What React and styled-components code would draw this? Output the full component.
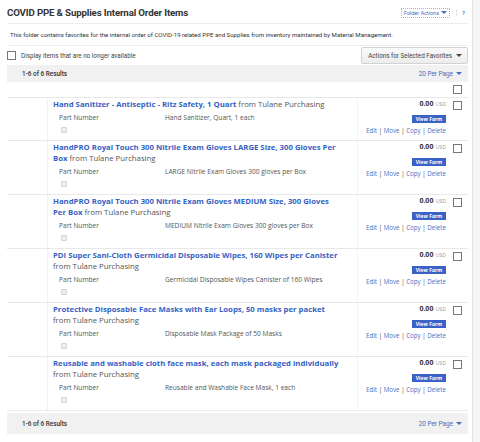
import React from 'react'
import styled, { createGlobalStyle } from 'styled-components'

const GlobalStyle = createGlobalStyle`
  html, body {
    margin: 0;
    padding: 0;
    background: #f5f5f5;
  }
  body {
    font-family: "Open Sans", "Liberation Sans", sans-serif;
    color: #333;
  }
`

const Panel = styled.div`
  width: 461px;
  min-height: 442px;
  background: #fff;
  border-right: 1px solid #e2e2e2;
  padding: 0 4px 0 7px;
`

const TitleBar = styled.div`
  display: flex;
  align-items: center;
  height: 21px;
  padding-top: 2px;
  border-bottom: 1px solid #ececec;
`

const Title = styled.h1`
  flex: 1;
  margin: 0;
  font-family: Roboto, "Liberation Sans", sans-serif;
  font-size: 9.7px;
  font-weight: 700;
  letter-spacing: -0.15px;
  color: #333;
`

const FolderActions = styled.span`
  display: inline-flex;
  align-items: center;
  gap: 2px;
  height: 8px;
  padding: 0 2px;
  border: 1px dotted #9fb3dc;
  font-family: Roboto, "Liberation Sans", sans-serif;
  font-size: 5.5px;
  color: #4a6fc0;
`

const Help = styled.span`
  margin-left: 6px;
  padding-left: 5px;
  border-left: 1px solid #e3e3e3;
  margin-right: 3px;
  font-family: Roboto, "Liberation Sans", sans-serif;
  font-size: 6px;
  font-weight: 700;
  color: #6880b8;
`

const Description = styled.p`
  margin: 0;
  padding: 0 3px;
  height: 21px;
  line-height: 21px;
  border-bottom: 1px solid #ececec;
  font-family: Roboto, "Liberation Sans", sans-serif;
  font-size: 6.1px;
  color: #333;
  white-space: nowrap;
`

const OptionsRow = styled.div`
  display: flex;
  align-items: center;
  height: 19px;
`

const Box = styled.span`
  display: inline-block;
  box-sizing: border-box;
  width: ${p => p.size || 9}px;
  height: ${p => p.size || 9}px;
  border: 1px solid ${p => (p.muted ? '#d6d6d6' : '#777')};
  background: ${p => (p.muted ? '#eee' : '#fff')};
  border-radius: ${p => (p.muted ? 1 : 0)}px;
`

const OptionLabel = styled.span`
  flex: 1;
  margin-left: 5px;
  font-family: Roboto, "Liberation Sans", sans-serif;
  font-size: 6.3px;
  color: #444;
`

const ActionsButton = styled.span`
  display: inline-flex;
  align-items: center;
  gap: 4px;
  height: 15px;
  padding: 0 5px 0 6px;
  border: 1px solid #d2d2d2;
  border-radius: 2px;
  background: linear-gradient(#fafafa, #ececec);
  font-family: Roboto, "Liberation Sans", sans-serif;
  font-size: 6.3px;
  color: #444;
`

const ResultsBar = styled.div`
  display: flex;
  align-items: center;
  justify-content: space-between;
  height: ${p => p.h || 17}px;
  margin-top: ${p => p.mt || 0}px;
  padding: 0 6px 0 15px;
  background: #f1f1f1;
  font-family: Roboto, "Liberation Sans", sans-serif;
  font-size: 6.4px;
  font-weight: 500;
  color: #333;
`

const PerPage = styled.span`
  display: inline-flex;
  align-items: center;
  gap: 3px;
  font-weight: 400;
  color: #4a6fc0;
`

const Caret = styled.span`
  display: inline-block;
  width: 0;
  height: 0;
  border-left: 3px solid transparent;
  border-right: 3px solid transparent;
  border-top: 3.5px solid ${p => p.color || '#444'};
`

const HeaderRow = styled.div`
  display: flex;
  justify-content: flex-end;
  align-items: center;
  height: 15px;
  padding-right: 6px;
  border-bottom: 1px solid #e8e8e8;
`

const Item = styled.div`
  display: grid;
  grid-template-columns: 41px 1fr 90px 21px;
  border-bottom: 1px solid #e8e8e8;
`

const Thumb = styled.div`
  border-right: 1px solid #f2f2f2;
`

const Content = styled.div`
  padding: 1px 0 4px 5px;
`

const ItemTitle = styled.div`
  max-width: 286px;
  font-size: 7.75px;
  line-height: 11px;
  color: #555;

  a {
    font-weight: 700;
    color: #3562c3;
    text-decoration: none;
  }
`

const Vendor = styled.span`
  white-space: nowrap;
`

const PartRow = styled.div`
  display: grid;
  grid-template-columns: 106px 1fr;
  margin-top: 3px;
  padding-left: 6px;
  height: 10px;
  line-height: 10px;
  font-size: 6.6px;
  color: #555;
`

const MiniCheck = styled.div`
  display: flex;
  align-items: center;
  height: 12px;
  padding-left: 8px;
  margin-top: 1px;
`

const Side = styled.div`
  display: flex;
  flex-direction: column;
  align-items: flex-end;
  padding: 1px 1px 0 0;
  border-left: 1px solid #f4f4f4;
`

const Price = styled.div`
  height: 10px;
  line-height: 10px;
  font-size: 7px;
  font-weight: 700;
  color: #333;

  small {
    margin-left: 2px;
    font-size: 5.3px;
    font-weight: 400;
    color: #999;
  }
`

const ViewForm = styled.span`
  margin-top: 6px;
  height: 8px;
  line-height: 8px;
  width: 34px;
  text-align: center;
  background: #3a62c6;
  color: #fff;
  font-size: 5px;
  font-weight: 700;
`

const Links = styled.div`
  margin-top: 3px;
  font-size: 6.2px;
  line-height: 9px;
  color: #444;

  a {
    color: #4a6fc0;
    text-decoration: none;
  }
`

const CheckCell = styled.div`
  display: flex;
  justify-content: center;
  padding-top: 3px;
`

const items = [
  {
    name: 'Hand Sanitizer - Antiseptic - Ritz Safety, 1 Quart',
    part: 'Hand Sanitizer, Quart, 1 each'
  },
  {
    name: 'HandPRO Royal Touch 300 Nitrile Exam Gloves LARGE Size, 300 Gloves Per Box',
    part: 'LARGE Nitrile Exam Gloves 300 gloves per Box'
  },
  {
    name: 'HandPRO Royal Touch 300 Nitrile Exam Gloves MEDIUM Size, 300 Gloves Per Box',
    part: 'MEDIUM Nitrile Exam Gloves 300 gloves per Box'
  },
  {
    name: 'PDI Super Sani-Cloth Germicidal Disposable Wipes, 160 Wipes per Canister',
    part: 'Germicidal Disposable Wipes Canister of 160 Wipes'
  },
  {
    name: 'Protective Disposable Face Masks with Ear Loops, 50 masks per packet',
    part: 'Disposable Mask Package of 50 Masks'
  },
  {
    name: 'Reusable and washable cloth face mask, each mask packaged individually',
    part: 'Reusable and Washable Face Mask, 1 each'
  }
]

const FavoriteItem = ({ name, part }) => (
  <Item>
    <Thumb />
    <Content>
      <ItemTitle>
        <a href='#'>{name}</a> <Vendor>from Tulane Purchasing</Vendor>
      </ItemTitle>
      <PartRow>
        <span>Part Number</span>
        <span>{part}</span>
      </PartRow>
      <MiniCheck>
        <Box size={6} muted />
      </MiniCheck>
    </Content>
    <Side>
      <Price>0.00<small>USD</small></Price>
      <ViewForm>View Form</ViewForm>
      <Links>
        <a href='#'>Edit</a> | <a href='#'>Move</a> | <a href='#'>Copy</a> | <a href='#'>Delete</a>
      </Links>
    </Side>
    <CheckCell>
      <Box />
    </CheckCell>
  </Item>
)

const App = () => {
  return (
    <Panel>
      <GlobalStyle />
      <TitleBar>
        <Title>COVID PPE &amp; Supplies Internal Order Items</Title>
        <FolderActions>Folder Actions <Caret color='#4a6fc0' /></FolderActions>
        <Help>?</Help>
      </TitleBar>
      <Description>
        This folder contains favorites for the internal order of COVID-19 related PPE and Supplies from inventory maintained by Material Management.
      </Description>
      <OptionsRow>
        <Box />
        <OptionLabel>Display items that are no longer available</OptionLabel>
        <ActionsButton>Actions for Selected Favorites <Caret /></ActionsButton>
      </OptionsRow>
      <ResultsBar>
        <span>1-6 of 6 Results</span>
        <PerPage>20 Per Page <Caret color='#4a6fc0' /></PerPage>
      </ResultsBar>
      <HeaderRow>
        <Box />
      </HeaderRow>
      {items.map(item => (
        <FavoriteItem key={item.name} {...item} />
      ))}
      <ResultsBar mt={2} h={21}>
        <span>1-6 of 6 Results</span>
        <PerPage>20 Per Page <Caret color='#4a6fc0' /></PerPage>
      </ResultsBar>
    </Panel>
  )
}

export default App
